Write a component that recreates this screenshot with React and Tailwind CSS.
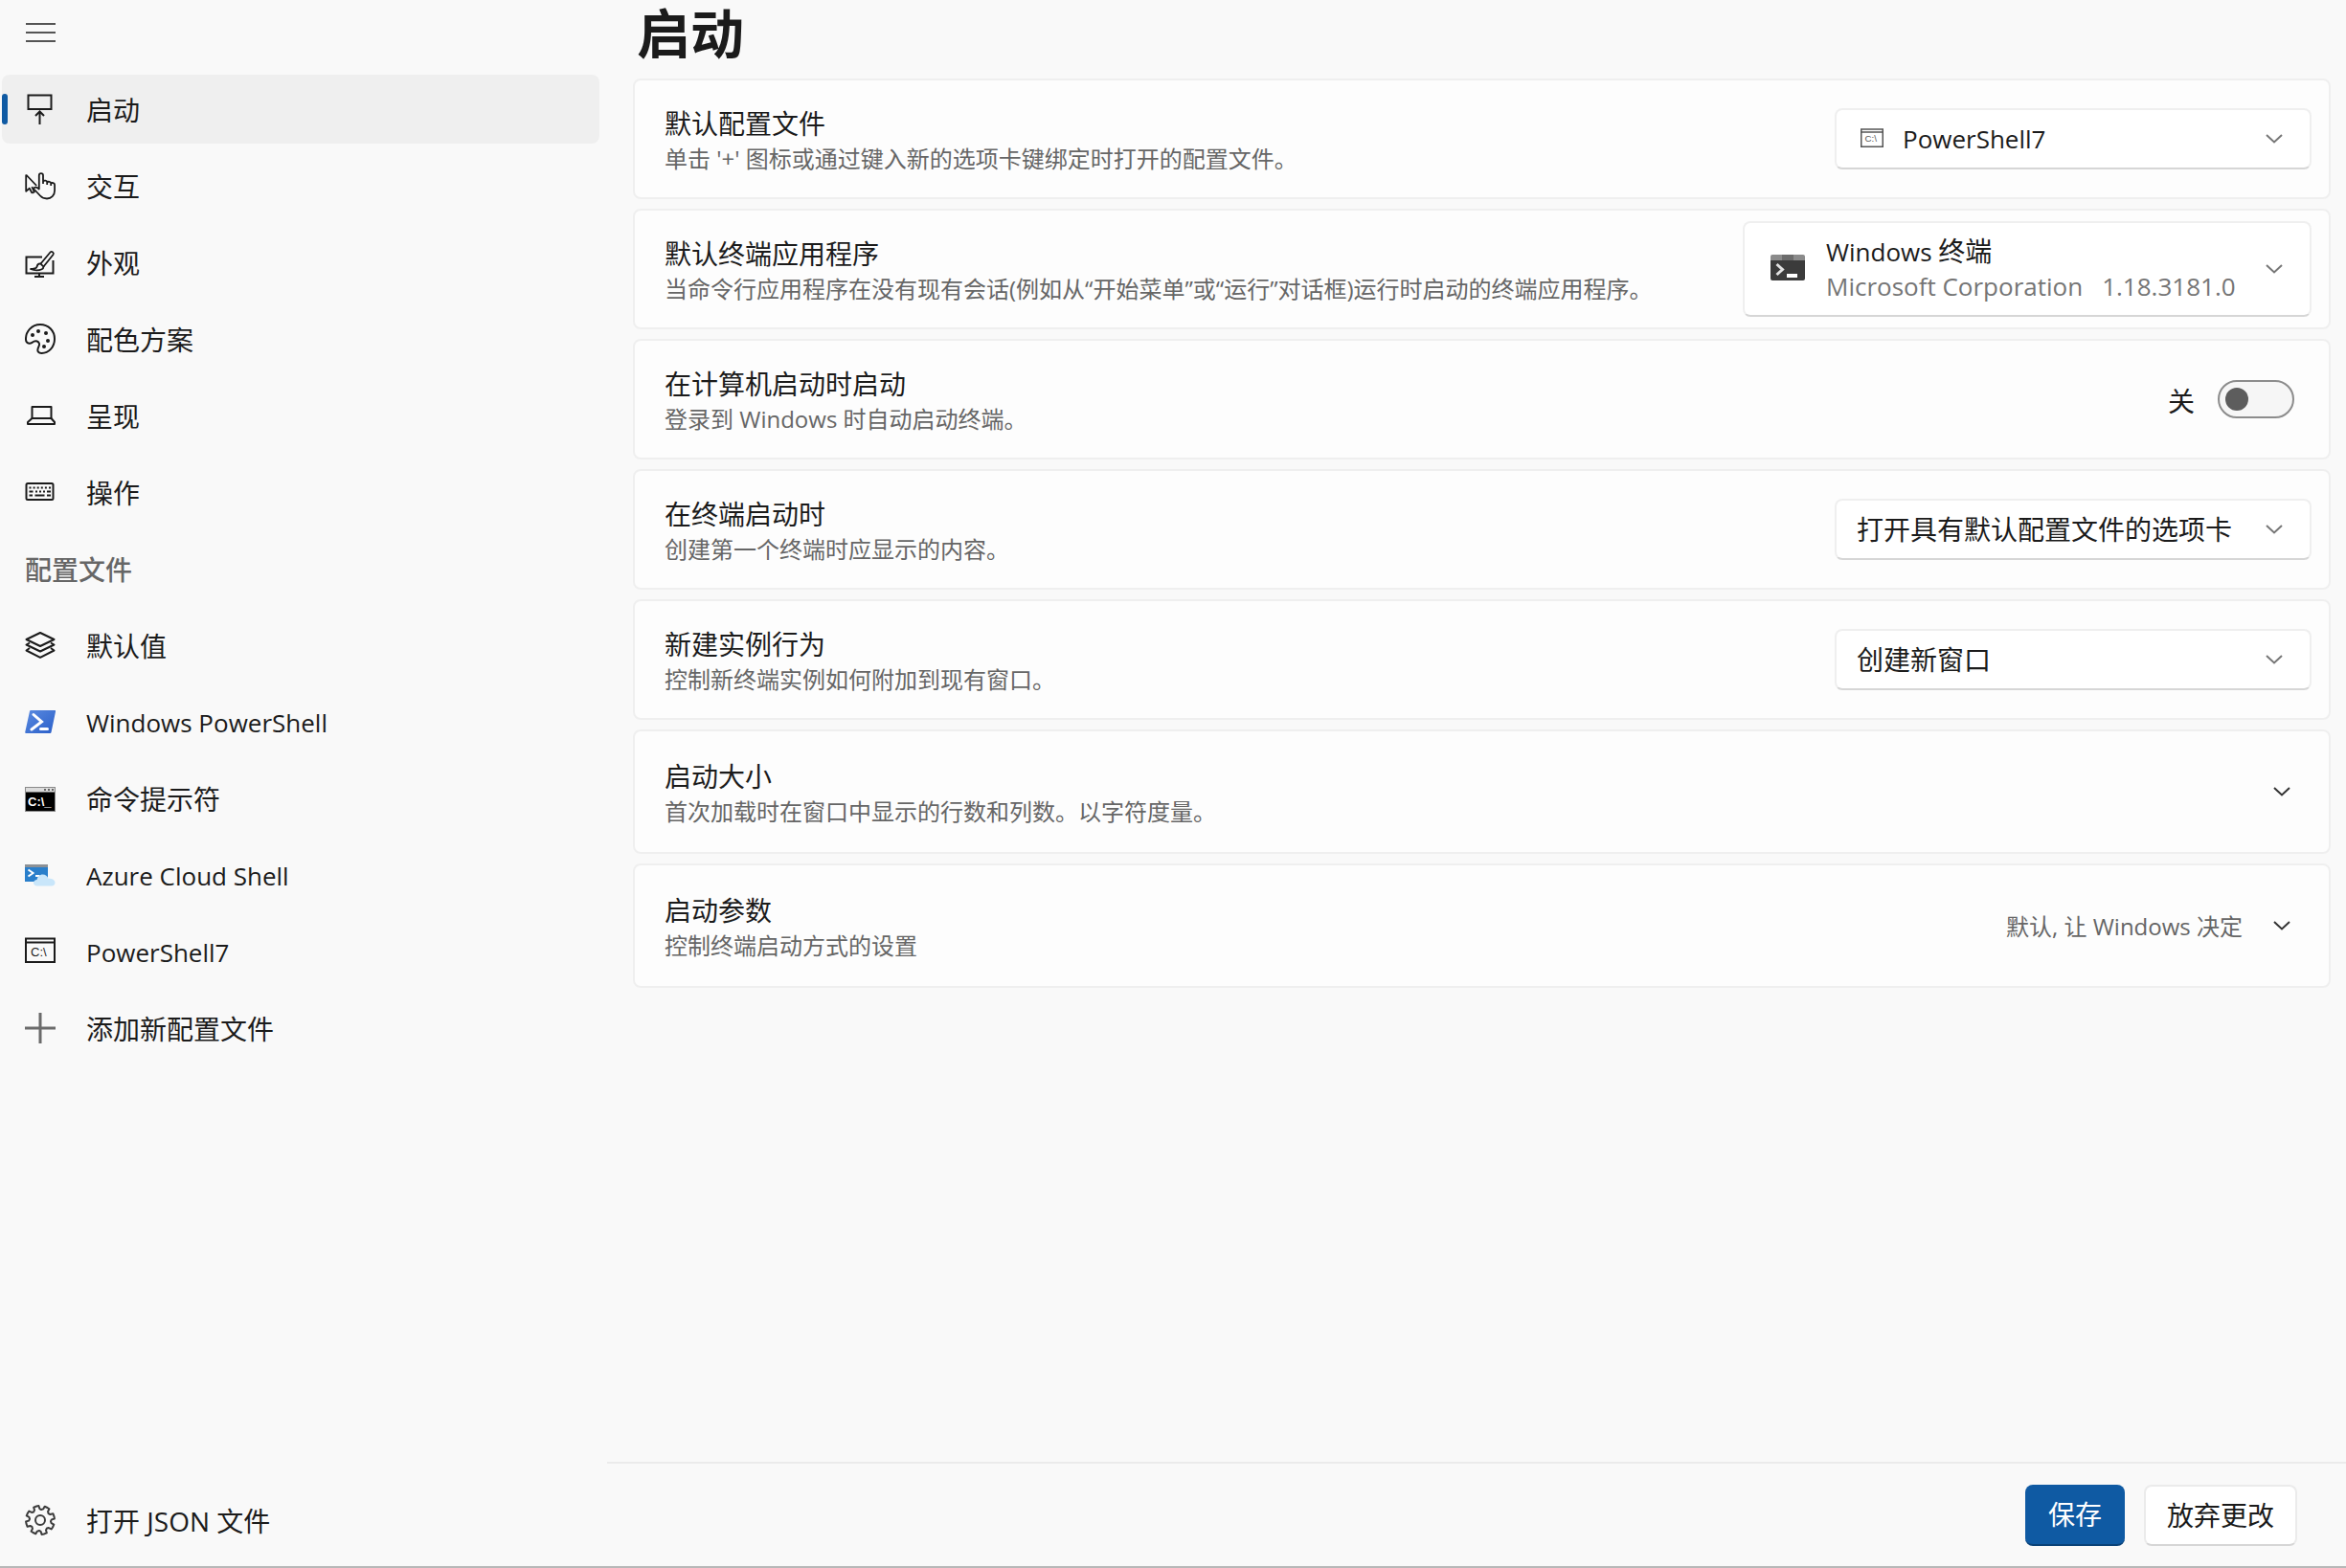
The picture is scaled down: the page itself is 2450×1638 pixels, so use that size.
import { useState } from 'react';

function StartupIcon() {
  return (
    <svg viewBox="0 0 32 32" className="size-8" fill="none" stroke="currentColor" strokeWidth="2">
      <rect x="3.500" y="1.500" width="24" height="14.500" />
      <path d="M15.500 32V19M11 23l4.500-4.500L20 23" />
    </svg>
  );
}

function InteractionIcon() {
  return (
    <svg viewBox="0 0 32 32" className="size-8" fill="none" stroke="currentColor" strokeWidth="1.800" strokeLinejoin="round">
      <path d="M1.200 4.500v17.300l3.600-3 2.700 5M1.200 4.500l11 11.500M7.500 23.800l2.400-1.300-2.600-5.300" />
      <path d="M14.800 17V5.200a2.100 2.100 0 0 1 4.200 0V14M19 11.500c1-1.500 4-1 4.200.8V15M23.200 12.500c1-1.300 3.800-.8 4 .8V16M27.200 13.500c1-1 3.900-.3 3.900 1.500v6c0 5-3.600 8.500-8.100 8.500-3 0-5.200-1-7-3L9 19c1-1.800 3.300-1.800 5.800.5V15" />
    </svg>
  );
}

function AppearanceIcon() {
  return (
    <svg viewBox="0 0 32 32" className="size-8" fill="none" stroke="currentColor" strokeWidth="2">
      <path d="M18 10.500H1.500v17h28V14M15 27.500V31M10 31h10" />
      <path d="M16.500 17.500 26.500 5.500c1.500-1.700 4.300.6 3 2.500L19.500 20.500" strokeWidth="1.800" />
      <path d="M16.500 17.500c-2.500-.3-3.700 1.500-4 3.300-.3 1.500-2 2.200-7 2.200 4 1.500 9.500 1.500 12.200.2 1.500-.8 1.800-2 1.800-2.700z" strokeWidth="1.800" />
    </svg>
  );
}

function PaletteIcon() {
  return (
    <svg viewBox="0 0 32 32" className="size-8">
      <path
        d="M1 17C.5 8 7.500 1 16 1s15 6.500 15 15-6 15-13.500 15c-3.500 0-4.500-2-4-4.500.3-1.700 2-3.500 1.500-5.500-.6-2.600-3.500-3.300-5.500-2.300C7.500 19.700 6.500 21 4.500 20.800 2 20.500 1.200 19 1 17z"
        fill="none"
        stroke="currentColor"
        strokeWidth="2"
      />
      <g fill="currentColor">
        <circle cx="8" cy="12" r="2" />
        <circle cx="14" cy="8" r="2" />
        <circle cx="22" cy="10" r="2" />
        <circle cx="24" cy="18" r="2" />
        <circle cx="20" cy="24" r="2" />
      </g>
    </svg>
  );
}

function LaptopIcon() {
  return (
    <svg viewBox="0 0 32 32" className="size-8" fill="none" stroke="currentColor" strokeWidth="2" strokeLinejoin="round">
      <rect x="7.500" y="7" width="20" height="12" />
      <path d="M7.500 19 3 23v2h28v-2l-3.500-4" />
    </svg>
  );
}

function KeyboardIcon() {
  return (
    <svg viewBox="0 0 32 32" className="size-8" fill="none" stroke="currentColor" strokeWidth="2">
      <rect x="1.500" y="7" width="28" height="17" rx="1.500" />
      <path d="M4.500 11.500h22.500" strokeDasharray="2 2.100" />
      <path d="M4.500 15.500h4M11 15.500h2M15 15.500h2M19 15.500h2M23 15.500h4M4.500 19.500h3.500M10.500 19.500h10M23 19.500h4" />
    </svg>
  );
}

function LayersIcon() {
  return (
    <svg viewBox="0 0 32 32" className="size-8" fill="none" stroke="currentColor" strokeWidth="2" strokeLinejoin="round">
      <path d="M16 3 30.500 10 16 17 1.500 10z" />
      <path d="M5 13.500 1.500 15.500 16 22.500l14.500-7-3.500-2M5 19 1.500 21.500 16 28.800l14.500-7.300L27 19" />
    </svg>
  );
}

function WindowsPowerShellIcon() {
  return (
    <svg viewBox="0 0 32 32" className="size-8">
      <defs>
        <linearGradient id="ps-blue" x1="0" y1="0" x2="1" y2="1">
          <stop offset="0" stopColor="#5b8be0" />
          <stop offset="1" stopColor="#2a5fc9" />
        </linearGradient>
      </defs>
      <path d="M6 4h25c1 0 1.300.5 1 1.500L27.500 27c-.2.800-.7 1-1.500 1H1.500C.5 28 0 27.500.3 26.500L5 5c.2-.7.500-1 1-1z" fill="url(#ps-blue)" />
      <path d="M9 8.500 17.500 16 7 24" fill="none" stroke="#fff" strokeWidth="3" strokeLinecap="round" />
      <path d="M16.500 23.500h7" stroke="#fff" strokeWidth="3" strokeLinecap="round" />
    </svg>
  );
}

function CommandPromptIcon() {
  return (
    <svg viewBox="0 0 32 32" className="size-8">
      <rect x="0.500" y="4.500" width="31" height="25" fill="#000" stroke="#8a8a8a" />
      <rect x="1" y="5" width="30" height="4.500" fill="#dcdcdc" />
      <path d="M20 7h10" stroke="#666" strokeWidth="2" strokeDasharray="2 2" />
      <text x="3" y="24" fill="#fff" fontSize="13" fontWeight="700" fontFamily="Liberation Sans, sans-serif">C:\_</text>
    </svg>
  );
}

function AzureIcon() {
  return (
    <svg viewBox="0 0 32 32" className="size-8">
      <rect x="0" y="5" width="24" height="18" fill="#2a7fcb" />
      <rect x="0" y="5" width="24" height="3" fill="#8c9196" />
      <path d="M3.500 10.500 8.500 14l-5 3.500" fill="none" stroke="#fff" strokeWidth="2" />
      <path d="M11 17h4.500" stroke="#fff" strokeWidth="2" />
      <path d="M13 27.500c-2.500 0-4-1.500-4-3.300s1.600-3.200 3.600-3.200c.5-3.200 3-5.500 6-5.500 2.900 0 5 1.700 5.900 4.300 3.500-.2 7 1.300 7 4.200 0 2-1.500 3.500-3.500 3.500z" fill="#c9e6fa" />
    </svg>
  );
}

function TerminalFrameIcon({ className = 'size-8' }) {
  return (
    <svg viewBox="0 0 32 32" className={className} fill="none" stroke="currentColor" strokeWidth="2">
      <path d="M1 2.500h30V27H1zM1 6.500h30" />
      <text x="6" y="20.500" fill="currentColor" stroke="none" fontSize="13" fontFamily="Liberation Sans, sans-serif">C:\</text>
    </svg>
  );
}

function AddIcon() {
  return (
    <svg viewBox="0 0 32 32" className="size-8" stroke="#6b6b6b" strokeWidth="3">
      <path d="M16 0v32M0 16h32" />
    </svg>
  );
}

function GearIcon() {
  const teeth = [];
  for (let i = 0; i < 8; i++) {
    const at = (deg, r) => {
      const a = ((deg + i * 45) * Math.PI) / 180;
      return `${(16 + r * Math.cos(a)).toFixed(2)} ${(16 + r * Math.sin(a)).toFixed(2)}`;
    };
    teeth.push(`${i === 0 ? 'M' : 'L'}${at(-15, 15)}L${at(-6, 15)}L${at(-3, 12)}L${at(6, 11)}L${at(15, 12)}L${at(18, 15)}`);
  }
  return (
    <svg viewBox="0 0 32 32" className="size-8" fill="none" stroke="#3c3c3c" strokeWidth="2" strokeLinejoin="round">
      <path d={`${teeth.join('')}Z`} />
      <circle cx="16" cy="16" r="5" />
    </svg>
  );
}

function WindowsTerminalIcon() {
  return (
    <svg viewBox="0 0 36 36" className="size-9 shrink-0">
      <path d="M2 3h32a2 2 0 0 1 2 2v5H0V5a2 2 0 0 1 2-2z" fill="#8b8b8b" />
      <path d="M12 3h12v6H12z" fill="#6c6c6c" />
      <path d="M0 9h36v19a2 2 0 0 1-2 2H2a2 2 0 0 1-2-2z" fill="#3b3b3b" />
      <path d="m6.500 13 6 5.500-6 5.500" fill="none" stroke="#e2e2e2" strokeWidth="3" />
      <path d="M17 25h11" stroke="#fff" strokeWidth="4" />
    </svg>
  );
}

function Chevron({ className }) {
  return (
    <svg viewBox="0 0 18 10" className={`h-[10px] w-[18px] ${className}`} fill="none" stroke="currentColor" strokeWidth="2">
      <path d="m1 1 8 7.500L17 1" />
    </svg>
  );
}

const settingsPages = [
  { label: '启动', icon: StartupIcon },
  { label: '交互', icon: InteractionIcon },
  { label: '外观', icon: AppearanceIcon },
  { label: '配色方案', icon: PaletteIcon },
  { label: '呈现', icon: LaptopIcon },
  { label: '操作', icon: KeyboardIcon },
];

const profilePages = [
  { label: '默认值', icon: LayersIcon },
  { label: 'Windows PowerShell', icon: WindowsPowerShellIcon, latin: true },
  { label: '命令提示符', icon: CommandPromptIcon },
  { label: 'Azure Cloud Shell', icon: AzureIcon, latin: true },
  { label: 'PowerShell7', icon: TerminalFrameIcon, latin: true },
  { label: '添加新配置文件', icon: AddIcon },
];

function NavItem({ label, icon: Icon, latin, active, onClick }) {
  return (
    <button
      type="button"
      onClick={onClick}
      className={`relative flex h-[72px] w-full items-center gap-8 rounded-lg pl-6 text-left ${
        active ? 'bg-[#efefef]' : 'hover:bg-[#f2f2f2]'
      }`}
    >
      {active && <span className="absolute left-0 h-8 w-[6px] rounded-full bg-[#0f5aa3]" />}
      <Icon />
      <span className={`pt-[2px] ${latin ? 'text-[26px]' : 'text-[28px]'}`}>{label}</span>
    </button>
  );
}

function Card({ title, description, htmlFor, tall, children }) {
  return (
    <section
      className={`flex items-center justify-between rounded-lg border-2 border-[#efefef] bg-[#fdfdfd] pr-[18px] pl-[31px] ${
        tall ? 'h-[130px]' : 'h-[126px]'
      }`}
    >
      <div className="pt-1">
        <label htmlFor={htmlFor} className="block text-[28px] leading-[38px]">
          {title}
        </label>
        <p className="text-[24px] leading-9 text-[#666]">{description}</p>
      </div>
      {children}
    </section>
  );
}

function Select({ id, options, icon }) {
  return (
    <div className="relative h-16 w-[498px]">
      <select
        id={id}
        className={`size-full appearance-none rounded-lg border-2 border-[#efefef] border-b-[#d6d6d6] bg-white pr-16 ${
          icon ? 'pl-[69px] text-[26px]' : 'pl-[21px] text-[28px]'
        }`}
      >
        {options.map((o) => (
          <option key={o}>{o}</option>
        ))}
      </select>
      {icon && (
        <span className="pointer-events-none absolute inset-y-0 left-[27px] flex items-center text-[#555]">{icon}</span>
      )}
      <span className="pointer-events-none absolute inset-y-0 right-[30px] flex items-center text-[#777]">
        <Chevron />
      </span>
    </div>
  );
}

export default function App() {
  const [page, setPage] = useState('启动');
  const [launchOnBoot, setLaunchOnBoot] = useState(false);

  return (
    <div className="flex min-h-screen border-b-2 border-[#b8b8b8] bg-[#f9f9f9] font-['Open_Sans','Noto_Sans_CJK_SC',sans-serif] text-[#1b1b1b]">
      <aside className="flex w-[634px] shrink-0 flex-col pr-2 pb-3 pl-[2px]">
        <button type="button" aria-label="菜单" className="mb-[10px] flex h-[68px] w-20 items-center pl-6">
          <svg viewBox="0 0 32 32" className="size-8" stroke="#555" strokeWidth="2">
            <path d="M1 7h31M1 16h31M1 25h31" />
          </svg>
        </button>
        <nav className="flex flex-col gap-2">
          {settingsPages.map((p) => (
            <NavItem key={p.label} {...p} active={page === p.label} onClick={() => setPage(p.label)} />
          ))}
          <h2 className="flex h-[72px] items-center pt-[2px] pl-6 text-[28px] font-medium text-[#666]">配置文件</h2>
          {profilePages.map((p) => (
            <NavItem key={p.label} {...p} active={page === p.label} onClick={() => setPage(p.label)} />
          ))}
        </nav>
        <div className="mt-auto">
          <NavItem label="打开 JSON 文件" icon={GearIcon} />
        </div>
      </aside>

      <div className="flex min-w-0 flex-1 flex-col">
        <main className="flex-1 pr-4 pl-[27px]">
          <h1 className="mb-[14px] pl-1 text-[56px] leading-[68px] font-bold">启动</h1>
          <div className="flex flex-col gap-[10px]">
            <Card title="默认配置文件" description="单击 '+' 图标或通过键入新的选项卡键绑定时打开的配置文件。" htmlFor="default-profile">
              <Select
                id="default-profile"
                options={['PowerShell7', 'Windows PowerShell', '命令提示符', 'Azure Cloud Shell']}
                icon={<TerminalFrameIcon className="size-6" />}
              />
            </Card>

            <Card
              title="默认终端应用程序"
              description="当命令行应用程序在没有现有会话(例如从“开始菜单”或“运行”对话框)运行时启动的终端应用程序。"
              htmlFor="default-terminal"
            >
              <button
                id="default-terminal"
                type="button"
                aria-haspopup="listbox"
                className="flex h-[100px] w-[594px] items-center rounded-lg border-2 border-[#efefef] border-b-[#d6d6d6] bg-white pr-7 pl-[27px] text-left"
              >
                <WindowsTerminalIcon />
                <span className="ml-[22px] flex-1 pb-[2px] text-[26px] leading-9">
                  <span className="block">
                    Windows <span className="text-[28px]">终端</span>
                  </span>
                  <span className="flex gap-5 text-[#757575]">
                    <span>Microsoft Corporation</span>
                    <span>1.18.3181.0</span>
                  </span>
                </span>
                <Chevron className="text-[#777]" />
              </button>
            </Card>

            <Card title="在计算机启动时启动" description="登录到 Windows 时自动启动终端。" htmlFor="launch-on-boot">
              <div className="flex items-center gap-6 pr-[18px]">
                <span className="pt-1 text-[28px]">{launchOnBoot ? '开' : '关'}</span>
                <input
                  id="launch-on-boot"
                  type="checkbox"
                  role="switch"
                  checked={launchOnBoot}
                  onChange={(e) => setLaunchOnBoot(e.target.checked)}
                  className="flex h-10 w-20 appearance-none items-center rounded-full border-2 border-[#8c8c8c] bg-[#f6f6f6] px-[6px] before:size-6 before:rounded-full before:bg-[#5d5d5d] checked:justify-end checked:bg-[#0f5aa3] checked:before:bg-white"
                />
              </div>
            </Card>

            <Card title="在终端启动时" description="创建第一个终端时应显示的内容。" htmlFor="first-window">
              <Select id="first-window" options={['打开具有默认配置文件的选项卡', '打开上一个会话中的窗口']} />
            </Card>

            <Card title="新建实例行为" description="控制新终端实例如何附加到现有窗口。" htmlFor="new-instance">
              <Select id="new-instance" options={['创建新窗口', '附加到最近使用的窗口']} />
            </Card>

            <Card title="启动大小" description="首次加载时在窗口中显示的行数和列数。以字符度量。" htmlFor="launch-size" tall>
              <button id="launch-size" type="button" className="flex h-full items-center px-[22px]">
                <Chevron className="text-[#333]" />
              </button>
            </Card>

            <Card title="启动参数" description="控制终端启动方式的设置" htmlFor="launch-params" tall>
              <button id="launch-params" type="button" className="flex h-full items-center gap-8 px-[22px]">
                <span className="pt-[2px] text-[24px] text-[#666]">默认, 让 Windows 决定</span>
                <Chevron className="text-[#333]" />
              </button>
            </Card>
          </div>
        </main>

        <footer className="flex h-[109px] items-center justify-end gap-5 border-t-2 border-[#ebebeb] pr-[51px] text-[28px]">
          <button type="button" className="h-16 rounded-lg border-b-2 border-[#0a4278] bg-[#0f5aa3] px-6 text-white">
            保存
          </button>
          <button type="button" className="h-16 rounded-lg border-2 border-[#ebebeb] border-b-[#d6d6d6] bg-white px-[22px]">
            放弃更改
          </button>
        </footer>
      </div>
    </div>
  );
}
